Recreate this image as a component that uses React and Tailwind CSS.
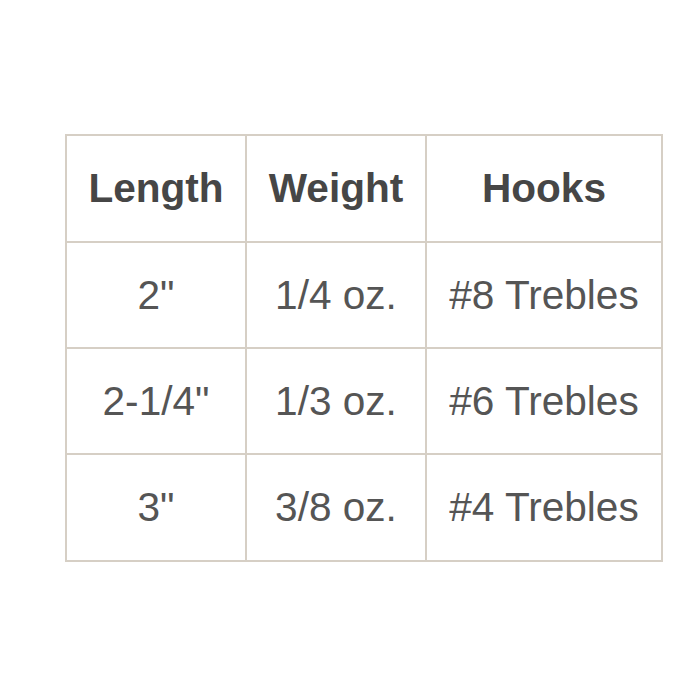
export default function App() {
  const rows = [
    ['2"', '1/4 oz.', '#8 Trebles'],
    ['2-1/4"', '1/3 oz.', '#6 Trebles'],
    ['3"', '3/8 oz.', '#4 Trebles'],
  ];
  const cell = 'bg-white flex items-center justify-center';
  return (
    <div className="w-[700px] h-[700px] bg-white pt-[134px] pl-[65px]" style={{ fontFamily: '"Liberation Sans", Arial, sans-serif' }}>
      <div className="grid w-[598px] grid-cols-[178px_178px_234px] grid-rows-[105px_104px_104px_105px] gap-[2px] p-[2px] bg-[#d6cfc5]">
        <div className={cell}><span className="text-[40.6px] font-bold text-[#464646]">Length</span></div>
        <div className={cell}><span className="text-[40.6px] font-bold text-[#464646]">Weight</span></div>
        <div className={cell}><span className="text-[40.6px] font-bold text-[#464646]">Hooks</span></div>
        {rows.map((r, i) =>
          r.map((t, j) => (
            <div key={i + '-' + j} className={cell}>
              <span className="text-[40.6px] text-[#555555]">{t}</span>
            </div>
          ))
        )}
      </div>
    </div>
  );
}
